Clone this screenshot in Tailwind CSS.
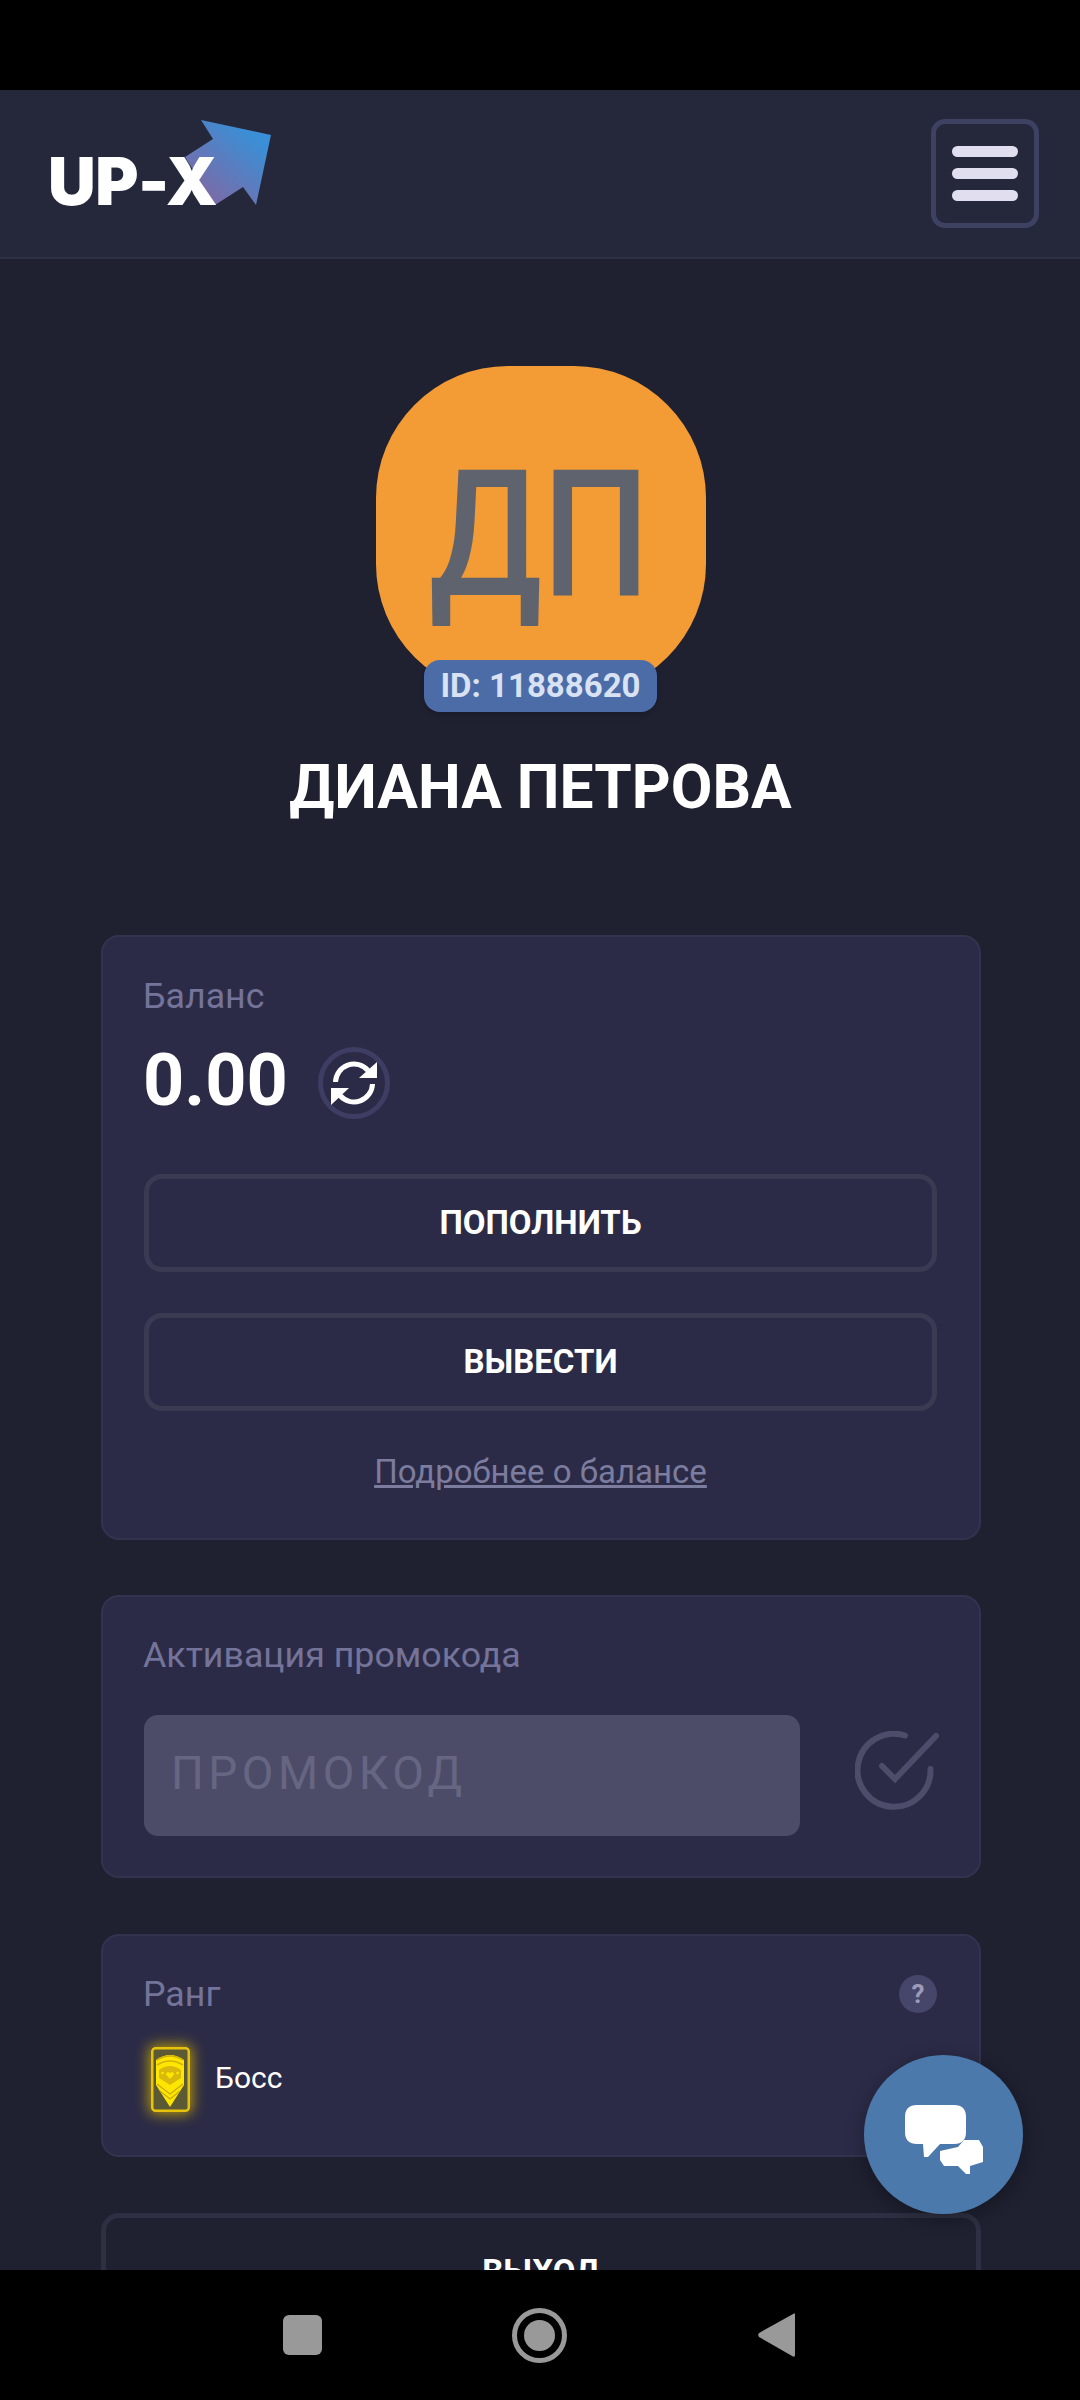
<!DOCTYPE html>
<html lang="ru">
<head>
  <meta charset="UTF-8" />
  <meta name="viewport" content="width=device-width, initial-scale=1" />
  <title>UP-X</title>
  <script src="https://cdn.jsdelivr.net/npm/@tailwindcss/browser@4"></script>
</head>
<body class="bg-black [font-family:Roboto,sans-serif]">
  <div class="relative flex flex-col w-[1080px] h-[2400px] overflow-hidden bg-[#1f2030]">
    <!-- Status bar -->
    <div class="h-[90px] shrink-0 bg-black"></div>

    <!-- Header -->
    <header class="h-[169px] shrink-0 flex items-center justify-between pl-[51px] pr-[41px] bg-[#25273b] border-b-2 border-[#2d2f44]">
      <div class="relative w-[230px] h-[110px]">
        <svg class="absolute left-0 top-0" width="230" height="110" viewBox="51 119 230 110">
          <defs>
            <linearGradient id="logoArrow" x1="0.85" y1="0.1" x2="0.2" y2="0.85">
              <stop offset="0.1" stop-color="#3a8fd6" />
              <stop offset="1" stop-color="#7a6ba8" />
            </linearGradient>
          </defs>
          <polygon points="201,120 271,135 256,205 243,187 215,205 185,157 213,139" fill="url(#logoArrow)" />
        </svg>
        <span class="absolute -left-[3px] top-[38px] text-[66px] leading-[48px] font-black text-white [font-family:Inter,sans-serif] tracking-[-0.5px]">UP-X</span>
      </div>
      <button class="w-[108px] h-[109px] flex flex-col items-center justify-center gap-[11px] rounded-[14px] border-[5px] border-[#3d4162]">
        <span class="block w-[66px] h-[11px] rounded-full bg-[#e0deef]"></span>
        <span class="block w-[66px] h-[11px] rounded-full bg-[#e0deef]"></span>
        <span class="block w-[66px] h-[11px] rounded-full bg-[#e0deef]"></span>
      </button>
    </header>

    <!-- Profile -->
    <main class="flex-1 min-h-0 overflow-hidden flex flex-col items-center pl-[2px]">
      <div class="relative mt-[107px] w-[330px] h-[330px] shrink-0 flex items-center justify-center rounded-[40%] bg-[#f39c35]">
        <span class="text-[176px] leading-none font-medium text-[#5f636e] mt-[7px] -ml-[3px] scale-x-[0.86]">ДП</span>
        <div class="absolute left-[48px] top-[294px] w-[233px] h-[52px] flex items-center justify-center rounded-[16px] bg-[#4c6ca8] text-[33px] font-bold text-[#d9e2f3] shadow-md">ID: 11888620</div>
      </div>
      <h1 class="mt-[56px] -ml-[1px] text-[60.5px] leading-[72px] font-bold text-white">ДИАНА ПЕТРОВА</h1>

      <!-- Balance -->
      <section class="mt-[111px] w-[880px] shrink-0 rounded-[18px] border-2 border-[#33334f] bg-[#2b2b47] pt-[37px] pb-[44px] px-[41px]">
        <div class="-ml-[1px] text-[35.75px] leading-[44px] text-[#74749a]">Баланс</div>
        <div class="mt-[19px] flex items-center h-[88px]">
          <span class="-ml-[1px] text-[72px] leading-[88px] font-bold text-white">0.00</span>
          <span class="ml-[30px] mt-[4px] w-[72px] h-[72px] flex items-center justify-center rounded-full border-[5px] border-[#3e3d63]">
            <svg width="46" height="46" viewBox="0 0 46 46" fill="none">
              <path d="M4.5 22A18.5 18.5 0 0 1 37 10.5" stroke="#fff" stroke-width="5" />
              <polygon points="46,2 46,18 28,18" fill="#fff" />
              <path d="M41.5 24A18.5 18.5 0 0 1 9 35.5" stroke="#fff" stroke-width="5" />
              <polygon points="0,45 0,28 18,28" fill="#fff" />
            </svg>
          </span>
        </div>
        <button class="mt-[49px] w-[793px] h-[98px] rounded-[18px] border-[5px] border-[#3a3a52] text-[33px] font-bold text-white">ПОПОЛНИТЬ</button>
        <button class="mt-[41px] w-[793px] h-[98px] rounded-[18px] border-[5px] border-[#3a3a52] text-[33px] font-bold text-white">ВЫВЕСТИ</button>
        <div class="mt-[39px] -ml-[1px] text-center text-[33px] leading-[44px] text-[#7c7c9e] underline">Подробнее о балансе</div>
      </section>

      <!-- Promo code -->
      <section class="mt-[55px] w-[880px] shrink-0 rounded-[18px] border-2 border-[#33334f] bg-[#2b2b47] pt-[36px] pb-[40px] px-[41px]">
        <div class="-ml-[1px] text-[35.75px] leading-[44px] text-[#74749a]">Активация промокода</div>
        <div class="mt-[38px] flex items-center justify-between">
          <input type="text" placeholder="ПРОМОКОД" class="w-[656px] h-[121px] rounded-[14px] bg-[#4c4c68] pl-[27px] pb-[6px] text-[46px] tracking-[4.5px] placeholder:text-[#666683] outline-none" />
          <svg class="-mt-[10px] -mr-[1px]" width="84" height="80" viewBox="0 0 84 80" fill="none">
            <path d="M50 4.5A36.5 36.5 0 1 0 75.5 38" stroke="#4d4d6b" stroke-width="6" stroke-linecap="round" />
            <path d="M27 35L40 48L81 5" stroke="#4d4d6b" stroke-width="6" stroke-linecap="round" />
          </svg>
        </div>
      </section>

      <!-- Rank -->
      <section class="mt-[56px] w-[880px] shrink-0 rounded-[18px] border-2 border-[#33334f] bg-[#2b2b47] pt-[36px] pb-[43px] px-[41px]">
        <div class="flex items-center justify-between">
          <span class="-ml-[1px] text-[35.75px] leading-[44px] text-[#74749a]">Ранг</span>
          <span class="mr-[1px] w-[38px] h-[38px] flex items-center justify-center rounded-full bg-[#46456a] text-[26px] font-bold text-[#9d9cb8]">?</span>
        </div>
        <div class="mt-[31px] flex items-center">
          <div class="ml-[7px] w-[39px] h-[65px] rounded-[4px] shadow-[0_0_14px_2px_#b89a0a]">
            <svg width="39" height="65" viewBox="0 0 39 65">
              <rect x="1.25" y="1.25" width="36.5" height="62.5" rx="3" fill="#5c5a34" stroke="#e8c30c" stroke-width="2.5" />
              <path d="M5 13Q19 3 33 13V38L19 60L5 38Z" fill="#ffe600" />
              <path d="M6 13Q19 5 32 13M6 18Q19 10 32 18" fill="none" stroke="#d3b208" stroke-width="1.6" />
              <path d="M8 23Q19 15 30 23V31L19 38L8 31Z" fill="#d9b90c" />
              <path d="M19 32L15 27.5Q15 25 17 25Q18.5 25 19 26.5Q19.5 25 21 25Q23 25 23 27.5Z" fill="#ffe600" />
              <circle cx="11.5" cy="26" r="1.3" fill="#ffe600" />
              <circle cx="26.5" cy="26" r="1.3" fill="#ffe600" />
              <path d="M6 37L19 47L32 37M9 44L19 52L29 44" fill="none" stroke="#c9a90a" stroke-width="1.2" />
            </svg>
          </div>
          <span class="ml-[25px] -mt-[5px] text-[30px] text-white">Босс</span>
        </div>
      </section>

      <!-- Logout -->
      <button class="mt-[56px] w-[880px] h-[118px] shrink-0 rounded-[18px] border-[5px] border-[#2e2f42] text-[33px] font-bold text-white">ВЫХОД</button>
    </main>

    <!-- Android navigation bar -->
    <nav class="h-[130px] shrink-0 bg-black flex items-center justify-center pr-[3px]">
      <div class="w-[39px] h-[40px] rounded-[6px] bg-[#999]"></div>
      <div class="ml-[190px] w-[55px] h-[55px] flex items-center justify-center rounded-full border-[5px] border-[#999]">
        <div class="w-[31px] h-[31px] rounded-full bg-[#999]"></div>
      </div>
      <svg class="ml-[191px]" width="37" height="46" viewBox="0 0 37 46">
        <path d="M36 1.5Q37 0.5 37 3V43Q37 45.5 35 44.5L1 25Q-0.5 23 1 21Z" fill="#999" />
      </svg>
    </nav>

    <!-- Chat button -->
    <button class="absolute right-[57px] bottom-[186px] w-[159px] h-[159px] flex items-center justify-center rounded-full bg-[#4c79ab] shadow-[0_4px_18px_rgba(0,0,0,0.3)]">
      <svg class="mt-[11px]" width="78" height="70" viewBox="0 0 78 70" fill="#fff">
        <path d="M12 0H49Q61 0 61 12V27Q61 39 49 39H35L23 52H19L18 39H12Q0 39 0 27V12Q0 0 12 0Z" />
        <polygon points="35,46 53,42 59,35 74,35 78,42 78,57 65,61 65,69 61,69 53,61 39,61 35,55" />
      </svg>
    </button>
  </div>
</body>
</html>
